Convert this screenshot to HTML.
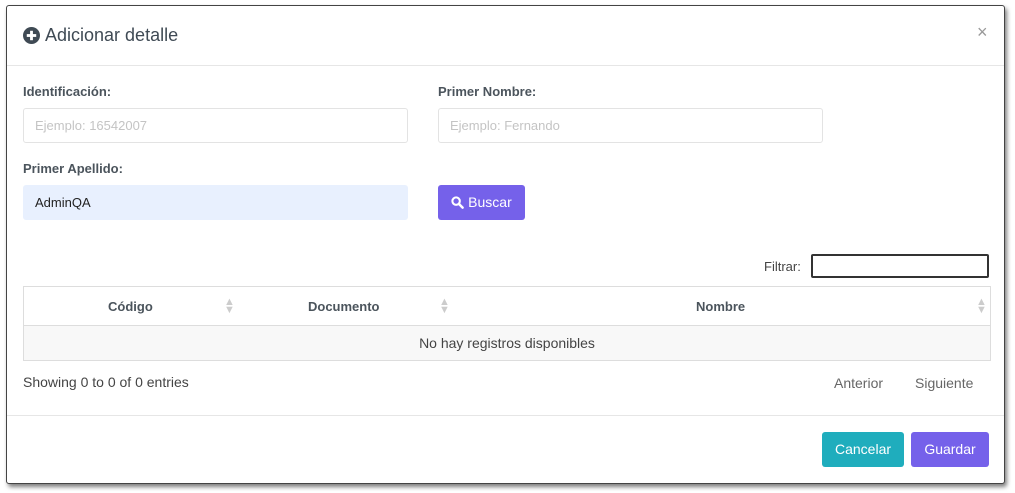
<!DOCTYPE html>
<html><head><meta charset="utf-8"><style>
*{box-sizing:border-box;margin:0;padding:0}
body{width:1015px;height:493px;background:#fff;font-family:"Liberation Sans",sans-serif;position:relative;overflow:hidden;color:#333}
.modal{position:absolute;left:6px;top:5px;width:999px;height:479px;background:#fff;border:1px solid #444;border-radius:3px;box-shadow:2px 3px 4px rgba(0,0,0,.5)}
.abs{position:absolute}
.title{left:16px;top:19px;font-size:18px;color:#3f4a54;display:flex;align-items:center}
.hr{left:0;width:997px;height:1px;background:#e6e6e6}
.lbl{font-size:13px;font-weight:bold;color:#4b545c}
.inp{height:35px;border:1px solid #e3e3e3;border-radius:3px;font-size:13px;padding:0 11px;line-height:33px;color:#c4c4c4}
.btn{border-radius:3px;color:#fff;font-size:14px;text-align:center}
.sort{font-size:11px;color:#ccc;line-height:8px}
</style></head><body>
<div class="modal">
<div class="abs title"><svg width="17" height="17" viewBox="0 0 18 18" style="margin-right:5px"><circle cx="9" cy="9" r="9" fill="#3f4a54"/><rect x="4" y="7.5" width="10" height="3" fill="#fff"/><rect x="7.5" y="4" width="3" height="10" fill="#fff"/></svg>Adicionar detalle</div>
<div class="abs" style="left:970px;top:16px;font-size:18px;color:#999">×</div>
<div class="abs hr" style="top:59px"></div>
<div class="abs lbl" style="left:16px;top:78px">Identificación:</div>
<div class="abs inp" style="left:16px;top:102px;width:385px">Ejemplo: 16542007</div>
<div class="abs lbl" style="left:431px;top:78px">Primer Nombre:</div>
<div class="abs inp" style="left:431px;top:102px;width:385px">Ejemplo: Fernando</div>
<div class="abs lbl" style="left:16px;top:155px">Primer Apellido:</div>
<div class="abs inp" style="left:16px;top:179px;width:385px;background:#e8f0fe;border-color:#e8f0fe;color:#222">AdminQA</div>
<div class="abs btn" style="left:431px;top:179px;width:87px;height:35px;background:#7561ea;line-height:35px"><svg width="13" height="13" viewBox="0 0 14 14" style="vertical-align:-2px"><circle cx="5.5" cy="5.5" r="4" stroke="#fff" stroke-width="2.2" fill="none"/><path d="M8.5 8.5L12.5 12.5" stroke="#fff" stroke-width="2.6" stroke-linecap="round"/></svg> Buscar</div>
<div class="abs" style="left:757px;top:253px;font-size:13px;color:#444">Filtrar:</div>
<div class="abs" style="left:804px;top:248px;width:178px;height:24px;border:2px solid #333;border-radius:2px"></div>
<div class="abs" style="left:16px;top:280px;width:968px;height:75px;border:1px solid #ddd">
 <div class="abs" style="left:0;top:0;width:966px;height:39px;border-bottom:1px solid #ddd"></div>
 <div class="abs lbl" style="left:84px;top:12px;color:#4b545c">Código</div>
 <div class="abs lbl" style="left:284px;top:12px;color:#4b545c">Documento</div>
 <div class="abs lbl" style="left:672px;top:12px;color:#4b545c">Nombre</div>
 <div class="abs sort" style="left:200px;top:11px">▲<br>▼</div>
 <div class="abs sort" style="left:415px;top:11px">▲<br>▼</div>
 <div class="abs sort" style="left:952px;top:11px">▲<br>▼</div>
 <div class="abs" style="left:0;top:39px;width:966px;height:34px;background:#f8f8f8;text-align:center;line-height:34px;font-size:14px;color:#444">No hay registros disponibles</div>
</div>
<div class="abs" style="left:16px;top:368px;font-size:14px;color:#444">Showing 0 to 0 of 0 entries</div>
<div class="abs" style="left:827px;top:369px;font-size:14px;color:#666">Anterior</div>
<div class="abs" style="left:908px;top:369px;font-size:14px;color:#666">Siguiente</div>
<div class="abs hr" style="top:409px"></div>
<div class="abs btn" style="left:815px;top:426px;width:82px;height:35px;line-height:35px;background:#1fadbd">Cancelar</div>
<div class="abs btn" style="left:904px;top:426px;width:78px;height:35px;line-height:35px;background:#7561ea">Guardar</div>
</div>
</body></html>
